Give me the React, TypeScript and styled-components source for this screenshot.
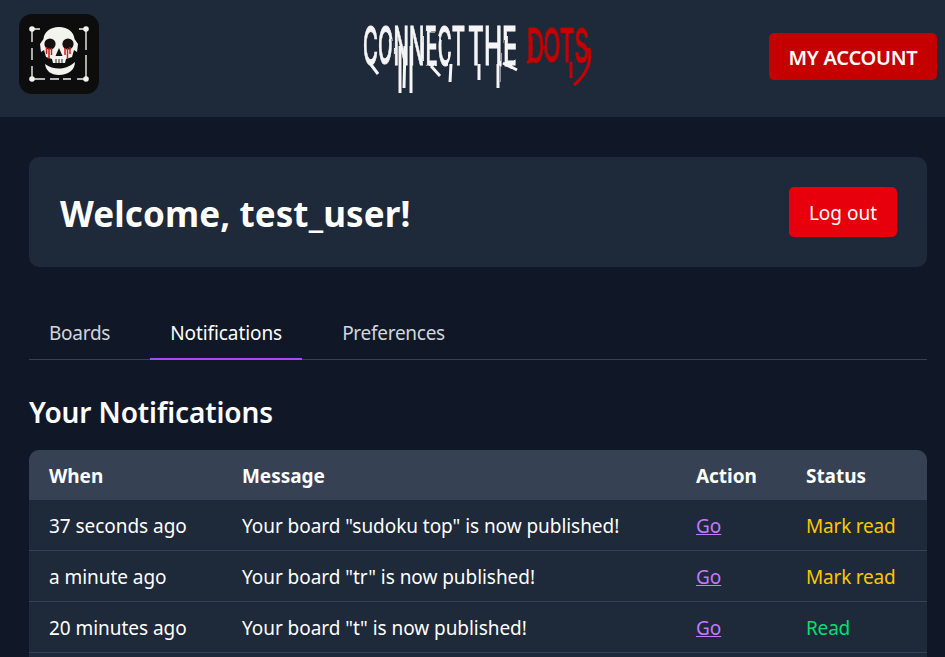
import React from "react";
import styled, { createGlobalStyle } from "styled-components";

const Global = createGlobalStyle`
  html, body { margin: 0; padding: 0; height: 100%; overflow: hidden; background: #101828; }
  body { font-family: "Noto Sans", "Open Sans", "Liberation Sans", sans-serif; color: #fff; }
  * { box-sizing: border-box; }
`;

const Page = styled.div`
  height: 657px;
  overflow: hidden;
  background: #101828;
`;
const Header = styled.header`
  height: 117px;
  background: #1e2939;
  padding: 14px 8px 0 19px;
  display: grid;
  grid-template-columns: 1fr auto 1fr;
  align-items: start;
`;
const LogoBox = styled.div`
  width: 80px;
  height: 80px;
  border-radius: 13px;
  background: #0d0d0d;
`;
const Title = styled.div`
  margin-top: 2px;
  margin-right: 7px;
  width: 240px;
  height: 84px;
`;
const AccountCell = styled.div`
  display: flex;
  justify-content: flex-end;
  padding-top: 19px;
`;
const AccountButton = styled.button`
  width: 168px;
  height: 47px;
  border: 0;
  border-radius: 5px;
  padding-top: 2px;
  background: #c40000;
  color: #fff;
  font: 600 20px "Noto Sans", sans-serif;
  letter-spacing: -0.25px;
`;
const Main = styled.main`
  padding: 40px 18px 0 29px;
`;
const WelcomeCard = styled.section`
  height: 110px;
  background: #1e2939;
  border-radius: 10px;
  padding: 2px 30px 0 31px;
  display: flex;
  align-items: center;
  justify-content: space-between;
`;
const Welcome = styled.h1`
  margin: 0;
  font-size: 35px;
  font-weight: 700;
  letter-spacing: 0.1px;
`;
const LogOut = styled.button`
  width: 108px;
  height: 50px;
  margin-top: -2px;
  padding-top: 2px;
  border: 0;
  border-radius: 5px;
  background: #e7000b;
  color: #fff;
  font: 400 19px "Noto Sans", sans-serif;
`;
const Tabs = styled.nav`
  margin-top: 43px;
  height: 50px;
  border-bottom: 1px solid #364153;
  display: flex;
`;
const Tab = styled.a<{ $active?: boolean }>`
  height: 50px;
  padding: 10px 20px 0;
  margin-right: 20px;
  font-size: 19px;
  letter-spacing: ${(p) => (p.$active ? "-0.08px" : "-0.27px")};
  color: ${(p) => (p.$active ? "#fff" : "#d1d5dc")};
  border-bottom: 2px solid ${(p) => (p.$active ? "#ad46ff" : "transparent")};
`;
const Heading = styled.h2`
  margin: 33px 0 19px;
  font-size: 28px;
  line-height: 38px;
  font-weight: 600;
  letter-spacing: -0.1px;
`;
const Table = styled.div`
  border-radius: 10px 10px 0 0;
  overflow: hidden;
  background: #1e2939;
`;
const Row = styled.div<{ $head?: boolean }>`
  display: grid;
  grid-template-columns: 193px 454px 110px 1fr;
  height: ${(p) => (p.$head ? "50px" : "51px")};
  padding: 2px 20px 0;
  align-items: center;
  font-size: 19px;
  letter-spacing: -0.05px;
  font-weight: ${(p) => (p.$head ? 700 : 400)};
  background: ${(p) => (p.$head ? "#364153" : "#1e2939")};
  border-bottom: ${(p) => (p.$head ? "none" : "1px solid #364153")};
`;
const GoLink = styled.a`
  color: #c27aff;
  text-decoration: underline;
`;
const Status = styled.span<{ $read?: boolean }>`
  color: ${(p) => (p.$read ? "#05df72" : "#fdc700")};
  letter-spacing: -0.2px;
`;

const Skull = () => (
  <svg width="80" height="80" viewBox="0 0 80 80">
    <path
      d="M13 15H21M60 15H67M67 15V36M67 41V65H58M52 65H44M40 65H31M26 65H13V52M13 46V34M13 28V15"
      stroke="#eeeeea"
      strokeWidth="1.4"
      fill="none"
    />
    <g fill="#f4f4ef">
      <circle cx="13" cy="15" r="2.8" />
      <circle cx="67" cy="15" r="2.8" />
      <circle cx="13" cy="65" r="2.8" />
      <circle cx="67" cy="65" r="2.8" />
      <path d="M40 13C31 13 25 18 24.5 25L21 30L22 38L25 36L27 43L33 45L34 49H46L47 45L53 43L55 36L58 38L59 30L55.5 25C55 18 49 13 40 13Z" />
      <path d="M26 50C30 53 35 54.5 40 54.5C45 54.5 50 53 56 48C56 56 49 61 40 61C32 61 27 57 26 50Z" />
    </g>
    <circle cx="31" cy="30" r="5.6" fill="#141010" />
    <circle cx="49" cy="30" r="5.6" fill="#141010" />
    <path d="M40 34L36.5 42H43.5Z" fill="#141010" />
    <path
      d="M27.5 33V40M30 34V45M32.5 34V41M46 34V41M48.5 34V45M51 33V40"
      stroke="#c81e1e"
      strokeWidth="1.5"
      fill="none"
    />
    <path d="M37 45V49M40 45V49M43 45V49" stroke="#141010" strokeWidth="0.9" />
  </svg>
);

const LogoText = () => (
  <svg width="240" height="84" viewBox="0 0 240 84" overflow="visible">
    <defs>
      <filter id="rough" x="-5%" y="-10%" width="110%" height="120%">
        <feTurbulence type="fractalNoise" baseFrequency="0.05 0.015" numOctaves="1" seed="7" />
        <feDisplacementMap in="SourceGraphic" scale="3" />
      </filter>
    </defs>
    <g filter="url(#rough)" fontFamily="Inter, 'Liberation Sans', sans-serif" fontWeight="500">
      <g fill="#f5f5f5" stroke="#f5f5f5" strokeWidth="1">
        <text transform="translate(8 49) scale(0.385 1)" fontSize="53">
          CONNECT
        </text>
        <text transform="translate(113 49) scale(0.46 1)" fontSize="53">
          THE
        </text>
        <path
          d="M14 46L23 58M45 30L45 77M56 30L56 77M50 30L49 72M96 48L95 66M76 50L85 60M124 48L124 64M143 48L143 72M147 46L162 54"
          fill="none"
          strokeWidth="3"
        />
      </g>
      <g fill="#c40000" stroke="#c40000" strokeWidth="1">
        <text transform="translate(172 46) scale(0.45 0.93)" fontSize="50">
          DOTS
        </text>
        <path d="M234 32C237 46 232 58 219 69M216 46V62M172 47L178 43" fill="none" strokeWidth="3" />
      </g>
    </g>
  </svg>
);

const rows = [
  ["37 seconds ago", 'Your board "sudoku top" is now published!', false],
  ["a minute ago", 'Your board "tr" is now published!', false],
  ["20 minutes ago", 'Your board "t" is now published!', true],
] as const;

export default function App() {
  return (
    <Page>
      <Global />
      <Header>
        <LogoBox>
          <Skull />
        </LogoBox>
        <Title>
          <LogoText />
        </Title>
        <AccountCell>
          <AccountButton>MY ACCOUNT</AccountButton>
        </AccountCell>
      </Header>
      <Main>
        <WelcomeCard>
          <Welcome>Welcome, test_user!</Welcome>
          <LogOut>Log out</LogOut>
        </WelcomeCard>
        <Tabs>
          <Tab>Boards</Tab>
          <Tab $active>Notifications</Tab>
          <Tab>Preferences</Tab>
        </Tabs>
        <Heading>Your Notifications</Heading>
        <Table>
          <Row $head>
            <span>When</span>
            <span>Message</span>
            <span>Action</span>
            <span>Status</span>
          </Row>
          {rows.map(([when, msg, read]) => (
            <Row key={when}>
              <span>{when}</span>
              <span>{msg}</span>
              <span>
                <GoLink>Go</GoLink>
              </span>
              <Status $read={read}>{read ? "Read" : "Mark read"}</Status>
            </Row>
          ))}
          <Row />
        </Table>
      </Main>
    </Page>
  );
}
